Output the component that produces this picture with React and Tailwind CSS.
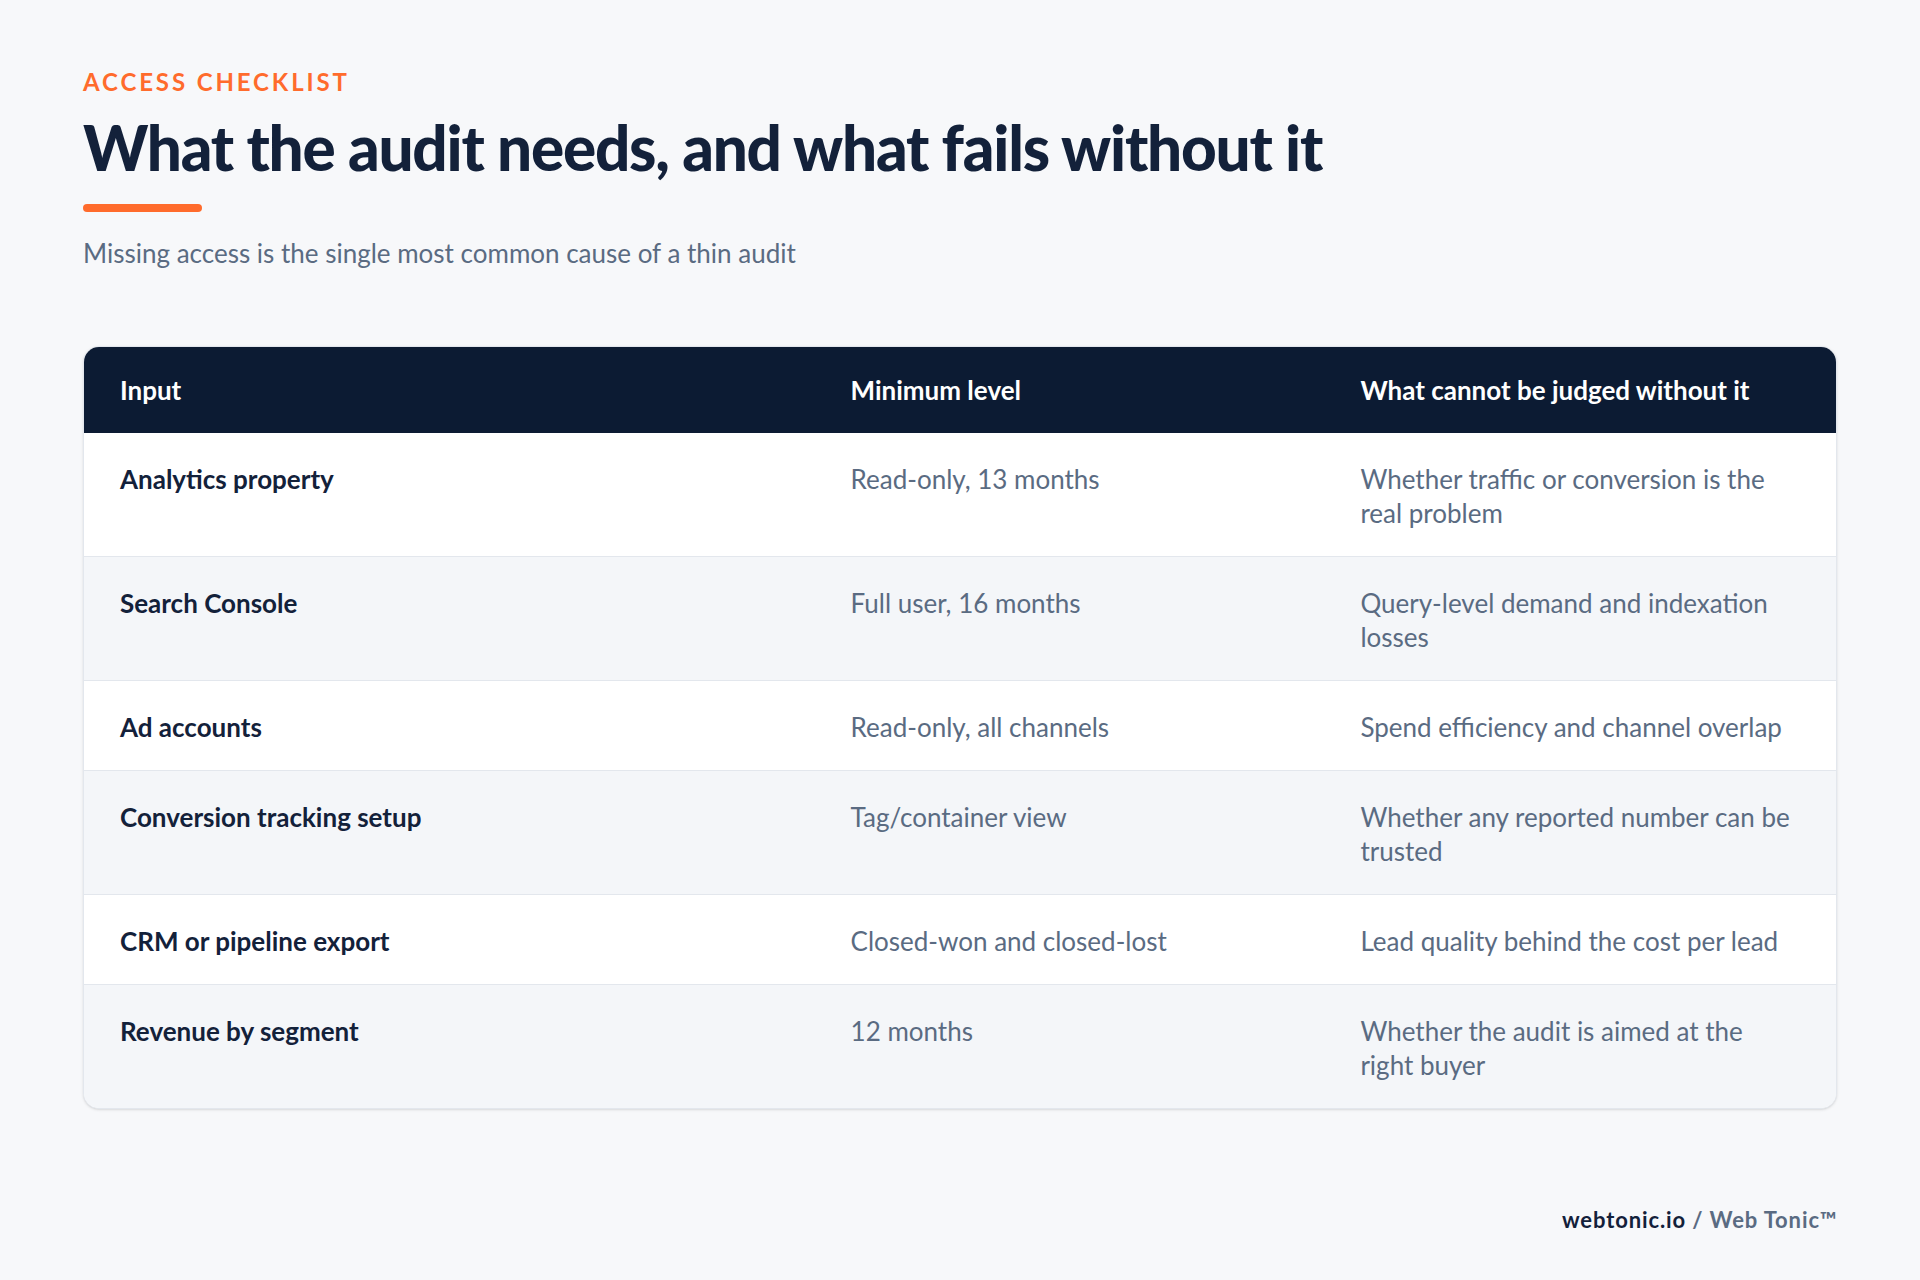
export default function App() {
  const rows = [
    ["Analytics property", "Read-only, 13 months", "Whether traffic or conversion is the real problem"],
    ["Search Console", "Full user, 16 months", "Query-level demand and indexation losses"],
    ["Ad accounts", "Read-only, all channels", "Spend efficiency and channel overlap"],
    ["Conversion tracking setup", "Tag/container view", "Whether any reported number can be trusted"],
    ["CRM or pipeline export", "Closed-won and closed-lost", "Lead quality behind the cost per lead"],
    ["Revenue by segment", "12 months", "Whether the audit is aimed at the right buyer"],
  ];
  return (
    <div className="w-[1920px] h-[1280px] bg-[#f7f8fa] px-[83px] pt-[70px] flex flex-col" style={{ fontFamily: "Lato, 'Noto Sans', sans-serif" }}>
      <div className="text-[24px] font-bold tracking-[0.12em] text-[#ff6b2c] leading-none">ACCESS CHECKLIST</div>
      <h1 className="mt-[22px] text-[62px] font-black tracking-[-0.02em] text-[#13213a] leading-none">What the audit needs, and what fails without it</h1>
      <div className="mt-[26px] w-[119px] h-[8px] rounded-full bg-[#ff6b2c]"></div>
      <p className="mt-[28px] text-[26px] text-[#5a6b82] leading-none">Missing access is the single most common cause of a thin audit</p>
      <div className="mt-[80px] rounded-[16px] overflow-hidden border border-[#e3e7ed] bg-white shadow-sm">
        <div className="grid grid-cols-[41.7%_29.1%_29.2%] bg-[#0c1b33] h-[86px] items-center text-white font-bold text-[26px]">
          <div className="pl-[36px]">Input</div>
          <div className="pl-[36px]">Minimum level</div>
          <div className="pl-[36px]">What cannot be judged without it</div>
        </div>
        {rows.map((r, i) => (
          <div key={i} className={`grid grid-cols-[41.7%_29.1%_29.2%] text-[26px] leading-[34px] pt-[29px] pb-[26px] ${i % 2 ? "bg-[#f4f6f9]" : "bg-white"} ${i ? "border-t border-[#e3e7ed]" : ""}`}>
            <div className="pl-[36px] font-bold text-[#13213a]">{r[0]}</div>
            <div className="pl-[36px] text-[#5a6b82]">{r[1]}</div>
            <div className="pl-[36px] pr-[36px] text-[#5a6b82]">{r[2]}</div>
          </div>
        ))}
      </div>
      <div className="mt-auto mb-[44px] self-end text-[22px] font-bold tracking-[0.04em]">
        <span className="text-[#13213a]">webtonic.io</span>
        <span className="text-[#5a6b82]">{"  /  "}Web Tonic™</span>
      </div>
    </div>
  );
}
